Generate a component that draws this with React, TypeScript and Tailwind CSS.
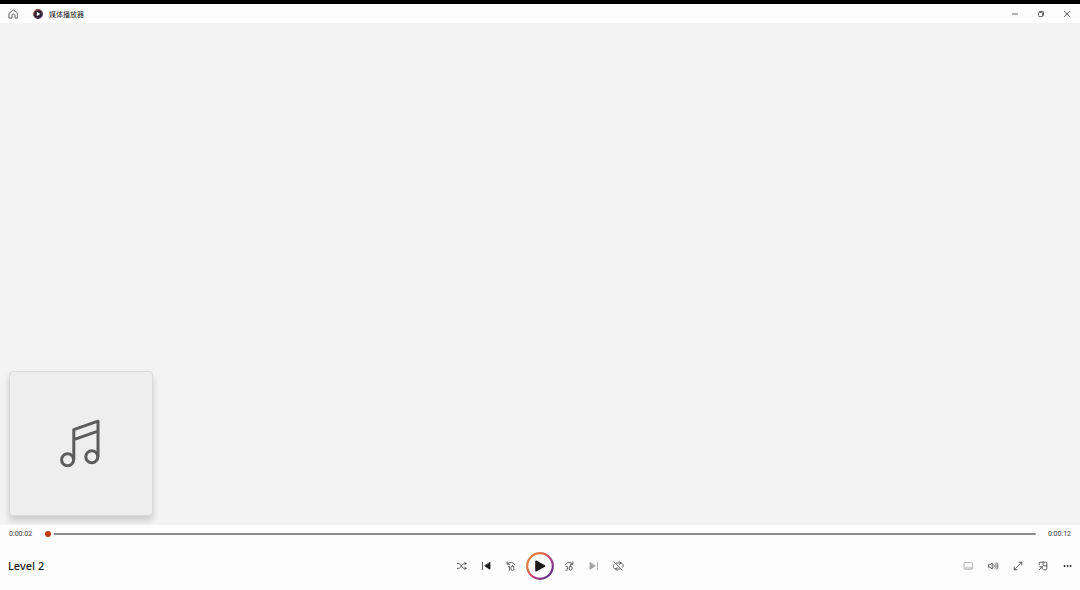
import { useState } from "react";
import type { ReactNode } from "react";

type IconButtonProps = {
  label: string;
  disabled?: boolean;
  children: ReactNode;
};

function IconButton({ label, disabled, children }: IconButtonProps) {
  return (
    <button
      type="button"
      aria-label={label}
      disabled={disabled}
      className="flex h-6 w-6 items-center justify-center text-[#3a3a3a] disabled:text-[#a0a0a0]"
    >
      <svg
        viewBox="0 0 12 12"
        className="h-3 w-3"
        fill="none"
        stroke="currentColor"
        strokeWidth="0.8"
        strokeLinecap="round"
        strokeLinejoin="round"
        aria-hidden="true"
      >
        {children}
      </svg>
    </button>
  );
}

function TitleBar() {
  return (
    <header className="flex h-[19px] items-center bg-[#fdfdfd]">
      <IconButton label="主页">
        <g transform="translate(1.5 0)">
          <path d="M1.8 5.2 6 1.9l4.2 3.3v4.9H7.5V7.6a1.5 1.5 0 0 0-3 0v2.5H1.8z" />
        </g>
      </IconButton>
      <div className="ml-2 flex items-center gap-1.5 pl-px">
        <svg viewBox="0 0 10 10" className="h-2.5 w-2.5" aria-hidden="true">
          <defs>
            <linearGradient id="logo" x1="0" y1="0" x2="1" y2="1">
              <stop offset="0" stopColor="#b9684a" />
              <stop offset="0.5" stopColor="#6b3553" />
              <stop offset="1" stopColor="#453263" />
            </linearGradient>
          </defs>
          <circle cx="5" cy="5" r="4.4" fill="#2b2430" stroke="url(#logo)" strokeWidth="1.1" />
          <path d="M3.8 2.8v4.4L7.4 5z" fill="#fff" />
        </svg>
        <h1 className="font-['Noto_Sans_CJK_SC',sans-serif] text-[7px] leading-3 text-[#1b1b1b]">
          媒体播放器
        </h1>
      </div>
      <div className="ml-auto flex items-center gap-0.5 pr-px">
        <IconButton label="最小化">
          <path d="M3.5 6h5" />
        </IconButton>
        <IconButton label="还原">
          <path d="M3.5 5.1a.7.7 0 0 1 .7-.7h2.7a.7.7 0 0 1 .7.7v2.8a.7.7 0 0 1-.7.7H4.2a.7.7 0 0 1-.7-.7zM4.8 3.4h2.7a1.1 1.1 0 0 1 1.1 1.1v2.8" />
        </IconButton>
        <IconButton label="关闭">
          <path d="m3.4 3.4 5.2 5.2M8.6 3.4 3.4 8.6" />
        </IconButton>
      </div>
    </header>
  );
}

function AlbumArt() {
  return (
    <div className="flex h-[145px] w-36 items-center justify-center rounded-[4px] border border-[#dadada] bg-[#eeeeee] shadow-[0_5px_6px_rgba(0,0,0,0.16)]">
      <svg
        viewBox="0 0 42 50"
        className="h-[50px] w-[42px]"
        fill="none"
        stroke="#5c5c5c"
        strokeWidth="3"
        strokeLinejoin="round"
        aria-hidden="true"
      >
        <circle cx="7.6" cy="40.7" r="6" />
        <circle cx="31.8" cy="37.8" r="6" />
        <path d="M13.8 41V10.6L38 2.2V38M13.8 20.6L38 12.2" />
      </svg>
    </div>
  );
}

function Timeline() {
  const [position, setPosition] = useState(0);
  return (
    <div className="flex h-[18px] items-center px-[9px] font-[Roboto,sans-serif] text-[7px] leading-3 text-[#3a3a3a]">
      <span className="w-[33px]">0:00:02</span>
      <input
        type="range"
        aria-label="播放进度"
        min={0}
        max={12}
        value={position}
        onChange={(event) => setPosition(Number(event.target.value))}
        className="h-3 min-w-0 flex-1 appearance-none bg-transparent [&::-webkit-slider-runnable-track]:h-0.5 [&::-webkit-slider-runnable-track]:rounded-full [&::-webkit-slider-runnable-track]:bg-[#8b8b8b] [&::-webkit-slider-thumb]:-mt-[5px] [&::-webkit-slider-thumb]:h-3 [&::-webkit-slider-thumb]:w-3 [&::-webkit-slider-thumb]:appearance-none [&::-webkit-slider-thumb]:rounded-full [&::-webkit-slider-thumb]:border-3 [&::-webkit-slider-thumb]:border-[#fdfdfd] [&::-webkit-slider-thumb]:bg-[#bf3a12]"
      />
      <span className="w-[35px] text-right">0:00:12</span>
    </div>
  );
}

function PlayButton() {
  return (
    <button type="button" aria-label="播放" className="mx-0.5 h-7 w-7">
      <svg viewBox="0 0 28 28" className="h-7 w-7" aria-hidden="true">
        <defs>
          <linearGradient id="ring" x1="0.1" y1="0.1" x2="0.9" y2="0.8">
            <stop offset="0" stopColor="#e8833a" />
            <stop offset="0.35" stopColor="#d96a50" />
            <stop offset="0.65" stopColor="#b23a86" />
            <stop offset="1" stopColor="#65318c" />
          </linearGradient>
        </defs>
        <circle cx="14" cy="14" r="12.8" fill="#fefefe" stroke="url(#ring)" strokeWidth="2.2" />
        <path
          d="M10 9.3v9.4L18.6 14z"
          fill="#1a1a1a"
          stroke="#1a1a1a"
          strokeWidth="1.6"
          strokeLinejoin="round"
        />
      </svg>
    </button>
  );
}

function Controls() {
  return (
    <div className="grid grid-cols-[1fr_auto_1fr] items-center pt-[9px]">
      <h2 className="pl-2 font-['Noto_Sans',sans-serif] text-[11px] leading-4 font-medium text-[#1b1b1b]">
        Level 2
      </h2>
      <div className="flex items-center gap-px">
        <IconButton label="随机播放">
          <g transform="translate(.7 0)">
            <path d="M1.7 3.6h.8c1.2 0 1.8.6 2.5 1.5L6.3 7c.7.9 1.3 1.4 2.4 1.4h1.6M1.7 8.4h.8C3.7 8.4 4.3 7.9 5 7l1.3-1.9c.7-.9 1.3-1.5 2.4-1.5h1.6M9 2.3l1.3 1.3L9 4.9M9 7.1l1.3 1.3L9 9.7" />
          </g>
        </IconButton>
        <IconButton label="上一个">
          <path d="M2.5 2.3v7.4" />
          <path d="M10 2.7v6.6L4.9 6z" fill="#1a1a1a" stroke="#1a1a1a" />
        </IconButton>
        <IconButton label="后退 10 秒">
          <path d="M2.2 1.8v2.5h2.5M2.4 4.1c1.8-2.5 5.8-2.4 7.3.8M3.4 6.7l1-.7v4.4" />
          <rect x="6" y="6" width="2.9" height="4.4" rx="1.4" />
        </IconButton>
        <PlayButton />
        <IconButton label="前进 30 秒">
          <path d="M9.9 1.8v2.5H7.4M9.7 4.1C7.9 1.6 3.8 1.7 2.3 4.9M2.9 6.3c1.6-.7 2.7 1.2.9 1.8 2 .3 1.2 2.8-1.1 2.1" />
          <rect x="6.3" y="6" width="2.7" height="4.3" rx="1.3" />
        </IconButton>
        <IconButton label="下一个" disabled>
          <path d="M9.5 2.3v7.4" />
          <path d="M2 2.7v6.6L7.1 6z" fill="currentColor" />
        </IconButton>
        <IconButton label="重复：关闭">
          <g transform="translate(-.8 0)">
            <path d="M4.3 3h4a2.5 2.5 0 0 1 2.1 4.2M7.2 1.5 8.7 3 7.2 4.5M7.9 9H3.7a2.7 2.7 0 0 1-2.1-4.4M4.8 7.5 3.3 9l1.5 1.5M1.9 1.9l8.2 8.2" />
          </g>
        </IconButton>
      </div>
      <div className="flex items-center justify-end gap-px">
        <IconButton label="字幕" disabled>
          <rect x="2" y="2.6" width="8.6" height="6.6" rx="1" />
          <path d="M3 7.9h6.6" />
        </IconButton>
        <IconButton label="音量">
          <path d="M1.8 4.8H3l2.2-1.9v6.2L3 7.2H1.8zM6.8 4.8c.6.7.6 1.7 0 2.4M8.3 3.7c1.2 1.4 1.2 3.2 0 4.6M9.7 2.8c1.7 1.9 1.7 4.5 0 6.4" />
        </IconButton>
        <IconButton label="全屏">
          <path d="M2.2 9.8 9.8 2.2M6.9 2.2h2.9v2.9M2.2 6.9v2.9h2.9" />
        </IconButton>
        <IconButton label="迷你播放器">
          <path d="M2.2 5V3.2a1 1 0 0 1 1-1h5.6a1 1 0 0 1 1 1v5.6a1 1 0 0 1-1 1H6.7M6.2 2.2v2.6a1 1 0 0 0 1 1h2.6M2.2 9.8l2.9-2.9M2.9 6.8h2.3v2.3" />
        </IconButton>
        <IconButton label="更多选项">
          <g fill="#1b1b1b" stroke="none">
            <circle cx="2.6" cy="6" r="0.9" />
            <circle cx="5.6" cy="6" r="0.9" />
            <circle cx="8.6" cy="6" r="0.9" />
          </g>
        </IconButton>
      </div>
    </div>
  );
}

export default function App() {
  return (
    <div className="flex min-h-screen flex-col border-t-4 border-black bg-[#f3f3f3]">
      <TitleBar />
      <main className="flex flex-1 items-end overflow-hidden pb-[9px] pl-[9px]">
        <AlbumArt />
      </main>
      <footer className="bg-[#fdfdfd] pb-[10px]">
        <Timeline />
        <Controls />
      </footer>
    </div>
  );
}
